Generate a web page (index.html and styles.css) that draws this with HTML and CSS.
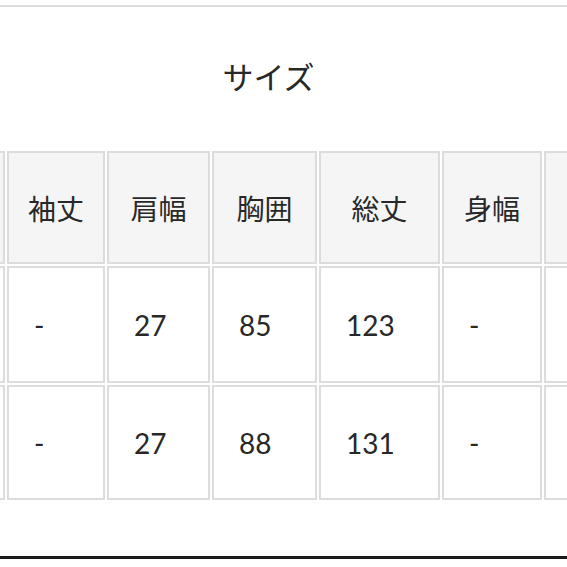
FILE: index.html
```html
<!DOCTYPE html>
<html lang="ja">
<head>
<meta charset="utf-8">
<title>サイズ</title>
<link rel="stylesheet" href="styles.css">
</head>
<body>
<div class="top-rule"></div>
<h2 class="title">サイズ</h2>
<div class="table-wrap">
  <div class="size-grid">
    <div class="cell head"></div>
    <div class="cell head">袖丈</div>
    <div class="cell head">肩幅</div>
    <div class="cell head">胸囲</div>
    <div class="cell head">総丈</div>
    <div class="cell head">身幅</div>
    <div class="cell head"></div>

    <div class="cell"></div>
    <div class="cell">-</div>
    <div class="cell">27</div>
    <div class="cell">85</div>
    <div class="cell">123</div>
    <div class="cell">-</div>
    <div class="cell"></div>

    <div class="cell"></div>
    <div class="cell">-</div>
    <div class="cell">27</div>
    <div class="cell">88</div>
    <div class="cell">131</div>
    <div class="cell">-</div>
    <div class="cell"></div>
  </div>
</div>
<div class="bottom-rule"></div>
</body>
</html>
```
FILE: styles.css
```css
html, body {
  margin: 0;
  padding: 0;
  background: #ffffff;
}
body {
  font-family: "Noto Sans CJK JP", "Noto Sans", sans-serif;
  color: #282828;
  width: 567px;
  overflow: hidden;
}
.top-rule {
  margin-top: 5px;
  height: 2px;
  background: #dddddd;
}
.title {
  margin: 54px 0 0 0;
  padding-right: 30px;
  height: 30px;
  line-height: 30px;
  font-size: 31px;
  font-weight: 400;
  text-align: center;
  color: #282828;
}
.table-wrap {
  margin-top: 60px;
  overflow: hidden;
  width: 567px;
}
.size-grid {
  display: grid;
  grid-template-columns: 100px 98px 103px 105px 121px 100px 100px;
  grid-template-rows: 113px 117px 115px;
  gap: 2px;
  margin-left: -95px;
  width: max-content;
}
.cell {
  box-sizing: border-box;
  border: 2px solid #dcdcdc;
  background: #ffffff;
  display: flex;
  align-items: center;
  justify-content: flex-start;
  padding-left: 25px;
  padding-top: 1px;
  font-family: "Lato", "Noto Sans CJK JP", sans-serif;
  font-size: 28px;
  color: #282828;
}
.cell.head {
  background: #f5f5f5;
  justify-content: center;
  padding-left: 0;
  padding-top: 0;
  font-family: "Noto Sans CJK JP", "Noto Sans", sans-serif;
  font-size: 28px;
}
.bottom-rule {
  margin-top: 56px;
  height: 3px;
  background: #1a1a1a;
}
```
